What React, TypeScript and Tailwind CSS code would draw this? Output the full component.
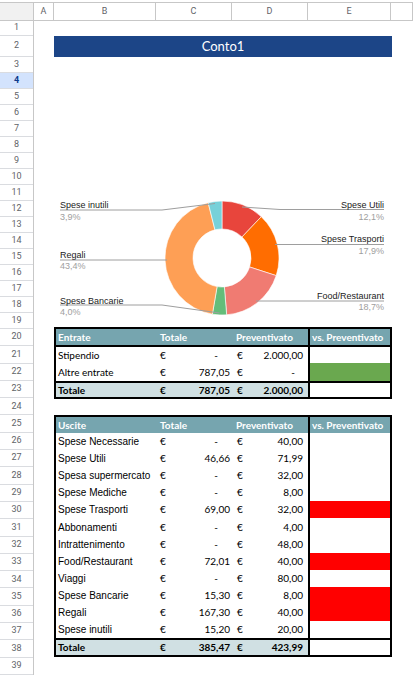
import React from "react";

const cols = [
  { name: "A", w: "w-[20px]" },
  { name: "B", w: "w-[102px]" },
  { name: "C", w: "w-[76px]" },
  { name: "D", w: "w-[76px]" },
  { name: "E", w: "w-[83px]" },
  { name: "", w: "flex-1" },
];

const rowH = (n: number) => {
  if (n === 1) return "h-[15px]";
  if (n === 2) return "h-[21px]";
  if (n < 20) return "h-[16px]";
  return "h-[17.3px]";
};

const slices = [
  { name: "Spese Utili", pct: 12.1, color: "#e8453c" },
  { name: "Spese Trasporti", pct: 17.9, color: "#ff6d01" },
  { name: "Food/Restaurant", pct: 18.7, color: "#f07b72" },
  { name: "Spese Bancarie", pct: 4.0, color: "#64bd7a" },
  { name: "Regali", pct: 43.4, color: "#fe9f55" },
  { name: "Spese inutili", pct: 3.9, color: "#78d1d9" },
];

const labels = [
  { t: "Spese inutili", p: "3,9%", x: 60, y: 208, anchor: "start", line: "60,210 162,210 215,203.5" },
  { t: "Regali", p: "43,4%", x: 60, y: 257.5, anchor: "start", line: "60,260 167,260" },
  { t: "Spese Bancarie", p: "4,0%", x: 60, y: 303.5, anchor: "start", line: "60,305 162,305 219.5,313" },
  { t: "Spese Utili", p: "12,1%", x: 384, y: 208, anchor: "end", line: "242,207 280,209.5 384,209.5" },
  { t: "Spese Trasporti", p: "17,9%", x: 384, y: 242, anchor: "end", line: "275,244.5 384,244.5" },
  { t: "Food/Restaurant", p: "18,7%", x: 384, y: 298.5, anchor: "end", line: "256,301 384,301" },
];

const entrate = [
  { label: "Stipendio", tot: "-", prev: "2.000,00", fill: "bg-white", h: "h-[16px]" },
  { label: "Altre entrate", tot: "787,05", prev: "-", fill: "bg-[#6aa84f]", h: "h-[18px]" },
];

const uscite = [
  { label: "Spese Necessarie", tot: "-", prev: "40,00", red: false },
  { label: "Spese Utili", tot: "46,66", prev: "71,99", red: false },
  { label: "Spesa supermercato", tot: "-", prev: "32,00", red: false },
  { label: "Spese Mediche", tot: "-", prev: "8,00", red: false },
  { label: "Spese Trasporti", tot: "69,00", prev: "32,00", red: true },
  { label: "Abbonamenti", tot: "-", prev: "4,00", red: false },
  { label: "Intrattenimento", tot: "-", prev: "48,00", red: false },
  { label: "Food/Restaurant", tot: "72,01", prev: "40,00", red: true },
  { label: "Viaggi", tot: "-", prev: "80,00", red: false },
  { label: "Spese Bancarie", tot: "15,30", prev: "8,00", red: true },
  { label: "Regali", tot: "167,30", prev: "40,00", red: true },
  { label: "Spese inutili", tot: "15,20", prev: "20,00", red: false },
];

const arcPath = (a0: number, a1: number, R: number, r: number, cx: number, cy: number) => {
  const pt = (a: number, rad: number) => [cx + rad * Math.sin(a), cy - rad * Math.cos(a)];
  const large = a1 - a0 > Math.PI ? 1 : 0;
  const [x0, y0] = pt(a0, R);
  const [x1, y1] = pt(a1, R);
  const [x2, y2] = pt(a1, r);
  const [x3, y3] = pt(a0, r);
  return `M${x0} ${y0} A${R} ${R} 0 ${large} 1 ${x1} ${y1} L${x2} ${y2} A${r} ${r} 0 ${large} 0 ${x3} ${y3} Z`;
};

function Donut() {
  let acc = 0;
  return (
    <svg width="379" height="270" viewBox="34 57 379 270" className="block">
      {slices.map((s) => {
        const a0 = (acc / 100) * Math.PI * 2;
        acc += s.pct;
        const a1 = (acc / 100) * Math.PI * 2;
        return (
          <path key={s.name} d={arcPath(a0, a1, 57, 29, 222, 258)} fill={s.color} stroke="#fff" strokeWidth="0.6" />
        );
      })}
      {labels.map((l) => (
        <g key={l.t}>
          <polyline points={l.line} fill="none" stroke="#9e9e9e" strokeWidth="1" />
          <text x={l.x} y={l.y} textAnchor={l.anchor} fontFamily="Liberation Sans, Arial, sans-serif" fontSize="9" fill="#222">
            {l.t}
          </text>
          <text x={l.x} y={l.y + 11.5} textAnchor={l.anchor} fontFamily="Liberation Sans, Arial, sans-serif" fontSize="9" fill="#9e9e9e">
            {l.p}
          </text>
        </g>
      ))}
    </svg>
  );
}

function Money({ v, col }: { v: string; col: "C" | "D" }) {
  const isDash = v === "-";
  if (col === "C") {
    return (
      <div className="w-[76px] flex items-center justify-between pl-[3px] pr-[3px]">
        <span>€</span>
        <span className={isDash ? "mr-[12px]" : ""}>{v}</span>
      </div>
    );
  }
  return (
    <div className="w-[75px] flex items-center justify-between pl-[4px] pr-[5px]">
      <span>€</span>
      <span className={isDash ? "mr-[8px]" : ""}>{v}</span>
    </div>
  );
}

function HeaderRow({ first, h }: { first: string; h: string }) {
  return (
    <div className={`flex ${h} bg-[#76a5af] text-white font-bold`}>
      <div className="w-[101px] pl-[2px] flex items-center">{first}</div>
      <div className="w-[76px] pl-[3px] flex items-center">Totale</div>
      <div className="w-[75px] pl-[3px] flex items-center">Preventivato</div>
      <div className="w-[82px] border-l-2 border-black pl-[2px] flex items-center">vs. Preventivato</div>
    </div>
  );
}

function TotalRow({ tot, prev, h }: { tot: string; prev: string; h: string }) {
  return (
    <div className={`flex ${h} border-t-2 border-black font-bold`}>
      <div className="flex bg-[#d0e0e3]">
        <div className="w-[101px] pl-[2px] flex items-center">Totale</div>
        <Money v={tot} col="C" />
        <Money v={prev} col="D" />
      </div>
      <div className="w-[82px] border-l-2 border-black bg-white" />
    </div>
  );
}

export default function App() {
  const rows = Array.from({ length: 39 }, (_, i) => i + 1);
  return (
    <div className="w-[413px] h-[675px] overflow-hidden bg-white pt-[2px] font-['Lato',sans-serif] text-[10px] text-black">
      {/* column headers */}
      <div className="flex h-[19px] border-t border-b border-[#c7c7c7] font-['Roboto',sans-serif] text-[9px] text-[#5f6368]">
        <div className="w-[34px] bg-[#f1f1f1] border-r border-[#c7c7c7]" />
        {cols.map((c, i) => (
          <div
            key={i}
            className={`${c.w} flex items-center justify-center border-r border-[#c7c7c7] bg-white`}
          >
            {c.name}
          </div>
        ))}
      </div>

      <div className="flex">
        {/* row numbers */}
        <div className="w-[34px] shrink-0 border-r border-[#c7c7c7] font-['Roboto',sans-serif] text-[9px] text-[#5f6368]">
          {rows.map((n) => (
            <div
              key={n}
              className={`${rowH(n)} flex items-center justify-center border-b border-[#dadce0] ${
                n === 4 ? "bg-[#d3e3fd] font-bold text-[#0b3a8c]" : "bg-white"
              }`}
            >
              {n}
            </div>
          ))}
        </div>

        {/* sheet body */}
        <div className="flex-1">
          <div className="h-[15px]" />
          <div className="ml-[20px] w-[338px] h-[21px] bg-[#1c4587] text-white text-[13px] flex items-center justify-center">
            Conto1
          </div>
          <Donut />

          {/* Entrate */}
          <div className="ml-[20px] w-[338px] border-2 border-black">
            <HeaderRow first="Entrate" h="h-[18px] border-b-2 border-black" />
            {entrate.map((r) => (
              <div key={r.label} className={`flex ${r.h}`}>
                <div className="w-[101px] pl-[2px] flex items-center">{r.label}</div>
                <Money v={r.tot} col="C" />
                <Money v={r.prev} col="D" />
                <div className={`w-[82px] border-l-2 border-black ${r.fill}`} />
              </div>
            ))}
            <TotalRow tot="787,05" prev="2.000,00" h="h-[16px]" />
          </div>

          {/* Uscite */}
          <div className="mt-[16px] ml-[20px] w-[338px] border-2 border-black">
            <HeaderRow first="Uscite" h="h-[16px]" />
            {uscite.map((r) => (
              <div key={r.label} className="flex h-[17.1px]">
                <div className="w-[101px] pl-[2px] flex items-center font-['Liberation_Sans',Arial,sans-serif] whitespace-nowrap overflow-hidden">
                  {r.label}
                </div>
                <Money v={r.tot} col="C" />
                <Money v={r.prev} col="D" />
                <div className={`w-[82px] border-l-2 border-black ${r.red ? "bg-[#ff0000]" : "bg-white"}`} />
              </div>
            ))}
            <TotalRow tot="385,47" prev="423,99" h="h-[17px]" />
          </div>
        </div>
      </div>
    </div>
  );
}
